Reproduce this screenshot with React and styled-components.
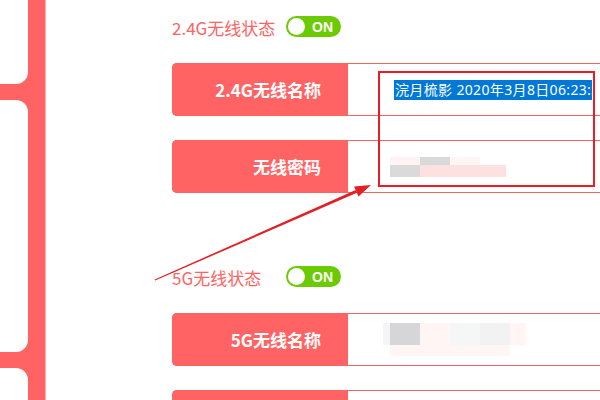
import React from "react";
import styled, { createGlobalStyle } from "styled-components";

const RED = "#ff6363";
const LINE = "#f56262";

const GlobalStyle = createGlobalStyle`
  html, body { margin: 0; padding: 0; background: #fff; }
  body { font-family: "Noto Sans CJK SC", "Noto Sans", sans-serif; }
`;

const Page = styled.div`
  position: relative;
  width: 600px;
  height: 400px;
  overflow: hidden;
  display: flex;
  background: #fff;
`;

const Sidebar = styled.aside`
  flex: none;
  width: 46px;
  height: 400px;
  svg { display: block; }
`;

const Main = styled.main`
  flex: none;
  width: 520px;
  margin-left: 126px;
  padding-top: 16px;
  display: flex;
  flex-direction: column;
`;

const Section = styled.section`
  display: flex;
  flex-direction: column;
  & + & { margin-top: 73px; }
`;

const StatusLine = styled.div`
  display: flex;
  align-items: center;
  height: 21px;
  margin-bottom: 26px;
`;

const StatusText = styled.span`
  width: 114px;
  font-size: 17px;
  color: ${RED};
  line-height: 21px;
  padding-top: 2px;
  white-space: nowrap;
`;

const Switch = styled.span`
  display: flex;
  align-items: center;
  box-sizing: border-box;
  width: 55px;
  height: 21px;
  padding: 0 2px;
  border-radius: 11px;
  background: #6bcb00;
`;

const Knob = styled.span`
  width: 17px;
  height: 17px;
  border-radius: 50%;
  background: #fff;
`;

const SwitchText = styled.span`
  margin-left: 7px;
  font-family: "Liberation Sans", Arial, sans-serif;
  font-weight: 700;
  font-size: 14px;
  color: #fff;
`;

const Row = styled.div`
  display: flex;
  box-sizing: border-box;
  height: 53px;
  border: 1px solid ${LINE};
  border-right: none;
  border-radius: 5px 0 0 5px;
  & + & { margin-top: 24px; }
`;

const RowLabel = styled.div`
  flex: none;
  width: 176px;
  box-sizing: border-box;
  margin: -1px 0 -1px -1px;
  padding-right: 27px;
  display: flex;
  align-items: center;
  justify-content: flex-end;
  background: ${RED};
  border-radius: 5px 0 0 5px;
  color: #fff;
  font-size: 17px;
  font-weight: 700;
  white-space: nowrap;
`;

const Field = styled.div`
  flex: none;
  width: 244px;
  display: flex;
  align-items: center;
  overflow: hidden;
`;

const Selected = styled.span`
  margin-left: 46px;
  padding: 0 1px;
  background: #0078d7;
  color: #fff;
  font-family: "Noto Sans", "Noto Sans CJK SC", sans-serif;
  font-size: 14px;
  letter-spacing: 0.35px;
  line-height: 20px;
  white-space: nowrap;
`;

const Mosaic = styled.div`
  margin-left: ${(p) => p.$offset}px;
  display: flex;
  flex-direction: column;
`;

const MosaicRow = styled.div`
  display: flex;
  height: ${(p) => p.$h}px;
`;

const Cell = styled.span`
  flex: none;
  width: ${(p) => p.$w}px;
  background: ${(p) => p.$c};
`;

const Annotation = styled.div`
  position: absolute;
  left: 378px;
  top: 71px;
  width: 217px;
  height: 116px;
  box-sizing: border-box;
  border: 2px solid #ed1c24;
  pointer-events: none;
`;

const ArrowLayer = styled.svg`
  position: absolute;
  left: 0;
  top: 0;
  pointer-events: none;
`;

const pwd24 = [
  { h: 8, cells: [[30, "#fff3f3"], [30, "#d9d9d9"], [30, "#fff5f5"]] },
  { h: 12, cells: [[30, "#dadada"], [86, "#fde0e0"]] },
];

const name5 = [
  {
    h: 22,
    cells: [
      [7, "#f5f5f5"],
      [30, "#d6d6d8"],
      [30, "#fff5f5"],
      [30, "#f5f6f6"],
      [30, "#f2f2f2"],
      [16, "#fff5f5"],
    ],
  },
  { h: 11, cells: [[7, "transparent"], [120, "#fff5f5"]] },
];

function Blur({ data, offset }) {
  return (
    <Mosaic $offset={offset}>
      {data.map((r, i) => (
        <MosaicRow key={i} $h={r.h}>
          {r.cells.map(([w, c], j) => (
            <Cell key={j} $w={w} $c={c} />
          ))}
        </MosaicRow>
      ))}
    </Mosaic>
  );
}

function Status({ label }) {
  return (
    <StatusLine>
      <StatusText>{label}</StatusText>
      <Switch>
        <Knob />
        <SwitchText>ON</SwitchText>
      </Switch>
    </StatusLine>
  );
}

export default function App() {
  return (
    <>
      <GlobalStyle />
      <Page>
        <Sidebar>
          <svg width="46" height="400" viewBox="0 0 46 400">
            <rect x="28" y="0" width="17.5" height="400" fill={RED} />
            <path d="M0 84 H16 A12 12 0 0 0 28 72 V112 A12 12 0 0 0 16 100 H0 Z" fill={RED} />
            <path d="M0 352 H16 A12 12 0 0 0 28 340 V380 A12 12 0 0 0 16 368 H0 Z" fill={RED} />
          </svg>
        </Sidebar>
        <Main>
          <Section>
            <Status label="2.4G无线状态" />
            <Row>
              <RowLabel>2.4G无线名称</RowLabel>
              <Field>
                <Selected>浣月梳影 2020年3月8日06:23:35</Selected>
              </Field>
            </Row>
            <Row>
              <RowLabel>无线密码</RowLabel>
              <Field>
                <Blur data={pwd24} offset={42} />
              </Field>
            </Row>
          </Section>
          <Section>
            <Status label="5G无线状态" />
            <Row>
              <RowLabel>5G无线名称</RowLabel>
              <Field>
                <Blur data={name5} offset={35} />
              </Field>
            </Row>
            <Row>
              <RowLabel>无线密码</RowLabel>
              <Field />
            </Row>
          </Section>
        </Main>
        <Annotation />
        <ArrowLayer width="600" height="400" viewBox="0 0 600 400">
          <polygon points="154.8,279.5 355.7,190.0 356.9,192.8 155.2,280.5" fill="#e31e24" />
          <polygon points="371,185 358.5,196.4 354.1,186.4" fill="#e31e24" />
        </ArrowLayer>
      </Page>
    </>
  );
}
